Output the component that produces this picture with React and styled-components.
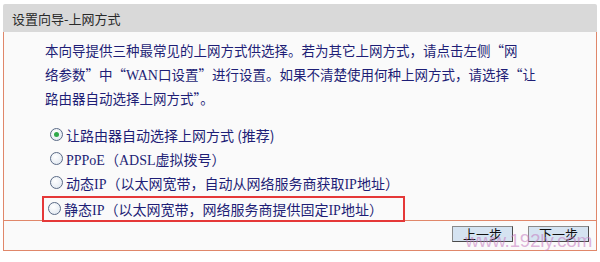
import React from "react";
import styled, { createGlobalStyle } from "styled-components";

const Global = createGlobalStyle`
  html, body { margin: 0; padding: 0; background: #ffffff; }
  body { font-family: "Noto Sans CJK SC", "Liberation Sans", sans-serif; }
`;

const Panel = styled.div`
  margin: 4px 3px 0 3px;
  width: 594px;
  position: relative;
`;

const TitleBar = styled.div`
  height: 28px;
  background: #d9d9d9;
  display: flex;
  align-items: center;
  padding-left: 9px;
  font-size: 13px;
  color: #2a2a2a;
  border-radius: 2px 2px 0 0;
`;

const Body = styled.div`
  background: #fafafa;
  border-left: 1px solid #e0876a;
  border-right: 1px solid #e0876a;
  padding: 7px 0 0 41px;
  height: 188px;
  box-sizing: border-box;
`;

const Para = styled.p`
  margin: 0;
  font-size: 13.5px;
  line-height: 23.5px;
  color: #1e1e76;
  white-space: nowrap;
`;

const Lat = styled.span`
  font-family: "Liberation Serif", serif;
  font-size: 14px;
`;

const RadioList = styled.div`
  margin-top: 12px;
  display: flex;
  flex-direction: column;
`;

const Row = styled.div`
  height: 24px;
  display: flex;
  align-items: center;
  padding-left: 5px;
  font-size: 14px;
  color: #1e1e76;
  white-space: nowrap;
`;

const Highlight = styled(Row)`
  align-self: flex-start;
  border: 2px solid #e53838;
  margin-left: -3px;
  padding: 0 20px 0 4px;
  height: 26px;
  box-sizing: border-box;
  margin-top: 1px;
`;

const Circle = styled.span`
  width: 13px;
  height: 13px;
  border-radius: 50%;
  border: 1px solid #5a6a86;
  background: radial-gradient(circle at 40% 35%, #ffffff 0%, #e6ecf3 70%);
  box-sizing: border-box;
  margin-right: 3px;
  display: inline-flex;
  align-items: center;
  justify-content: center;
  flex: none;
`;

const Dot = styled.span`
  width: 5px;
  height: 5px;
  border-radius: 50%;
  background: #2fa84a;
`;

const Footer = styled.div`
  height: 31px;
  box-sizing: border-box;
  border: 1px solid #e0876a;
  background: #fafafa;
  display: flex;
  justify-content: flex-end;
  align-items: center;
  gap: 15px;
  padding-right: 7px;
  padding-bottom: 3px;
`;

const Button = styled.button`
  width: 61px;
  height: 16px;
  padding: 0;
  background: #d5e3f1;
  border: 1px solid #4a4a4a;
  border-top-color: #8a8a8a;
  border-left-color: #8a8a8a;
  font-family: "Noto Sans CJK SC", sans-serif;
  font-size: 13px;
  line-height: 14px;
  color: #111;
`;

const Watermark = styled.div`
  position: absolute;
  right: 5px;
  bottom: 0px;
  font-family: "Liberation Sans", Arial, sans-serif;
  font-size: 19px;
  line-height: 20px;
  color: rgba(196, 120, 190, 0.55);
  pointer-events: none;
  letter-spacing: -0.3px;
`;

function Radio({ checked, children }) {
  return (
    <>
      <Circle>{checked && <Dot />}</Circle>
      <span>{children}</span>
    </>
  );
}

export default function App() {
  return (
    <>
      <Global />
      <Panel>
        <TitleBar>设置向导-上网方式</TitleBar>
        <Body>
          <Para>
            本向导提供三种最常见的上网方式供选择。若为其它上网方式，请点击左侧“网
            <br />
            络参数”中“<Lat>WAN</Lat>口设置”进行设置。如果不清楚使用何种上网方式，请选择“让
            <br />
            路由器自动选择上网方式”。
          </Para>
          <RadioList>
            <Row>
              <Radio checked>让路由器自动选择上网方式 (推荐)</Radio>
            </Row>
            <Row>
              <Radio>
                <Lat>PPPoE</Lat>（<Lat>ADSL</Lat>虚拟拨号）
              </Radio>
            </Row>
            <Row>
              <Radio>
                动态<Lat>IP</Lat>（以太网宽带，自动从网络服务商获取<Lat>IP</Lat>地址）
              </Radio>
            </Row>
            <Highlight>
              <Radio>
                静态<Lat>IP</Lat>（以太网宽带，网络服务商提供固定<Lat>IP</Lat>地址）
              </Radio>
            </Highlight>
          </RadioList>
        </Body>
        <Footer>
          <Button>上一步</Button>
          <Button>下一步</Button>
        </Footer>
        <Watermark>www.192ly.com</Watermark>
      </Panel>
    </>
  );
}
